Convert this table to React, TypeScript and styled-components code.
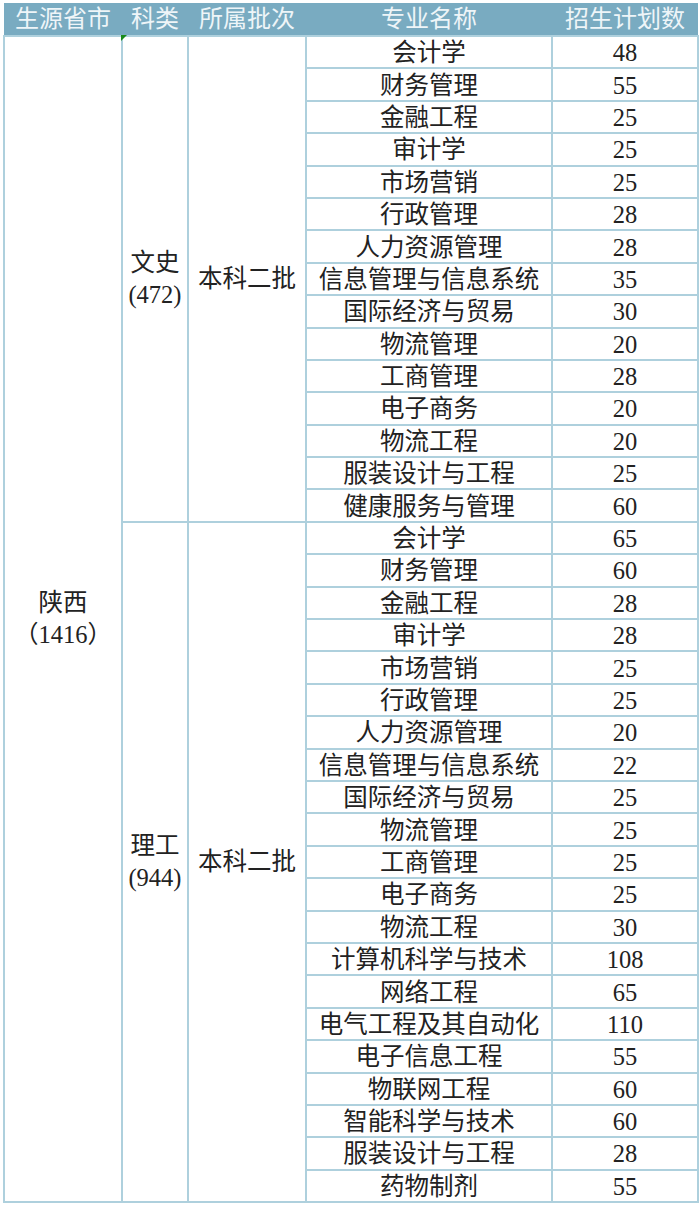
import React from 'react';
import styled, { createGlobalStyle } from 'styled-components';

const GlobalStyle = createGlobalStyle`
  html, body {
    margin: 0;
    padding: 0;
    background: #ffffff;
  }
  body {
    font-family: "Liberation Serif", "Noto Sans CJK SC", serif;
  }
`;

const Page = styled.div`
  padding: 3px 0 0 3px;
`;

const Wrap = styled.div`
  position: relative;
  width: 694px;
`;

const Table = styled.table`
  border-collapse: collapse;
  table-layout: fixed;
  width: 694px;
  font-size: 24.5px;
  color: #222;
`;

const HeadRow = styled.tr`
  height: 32px;
  background: #79abc1;
`;

const Th = styled.th`
  font-weight: normal;
  font-size: 24px;
  color: #eef5f8;
  padding: 0;
  text-align: center;
  line-height: 32px;
  white-space: nowrap;
  border: none;
`;

const Row = styled.tr`
  height: 32.4px;
`;

const Td = styled.td<{ $span?: boolean }>`
  border: 2px solid #aed0dd;
  padding: ${(p) => (p.$span ? '0' : '2px 0 0')};
  text-align: center;
  vertical-align: middle;
  white-space: nowrap;
  line-height: ${(p) => (p.$span ? '32px' : '26px')};
`;

const Marker = styled.div`
  position: absolute;
  left: 118px;
  top: 32px;
  width: 0;
  height: 0;
  border-top: 6px solid #1a8a1a;
  border-right: 6px solid transparent;
`;

type Item = [string, number];

const wenshi: Item[] = [
  ['会计学', 48],
  ['财务管理', 55],
  ['金融工程', 25],
  ['审计学', 25],
  ['市场营销', 25],
  ['行政管理', 28],
  ['人力资源管理', 28],
  ['信息管理与信息系统', 35],
  ['国际经济与贸易', 30],
  ['物流管理', 20],
  ['工商管理', 28],
  ['电子商务', 20],
  ['物流工程', 20],
  ['服装设计与工程', 25],
  ['健康服务与管理', 60],
];

const ligong: Item[] = [
  ['会计学', 65],
  ['财务管理', 60],
  ['金融工程', 28],
  ['审计学', 28],
  ['市场营销', 25],
  ['行政管理', 25],
  ['人力资源管理', 20],
  ['信息管理与信息系统', 22],
  ['国际经济与贸易', 25],
  ['物流管理', 25],
  ['工商管理', 25],
  ['电子商务', 25],
  ['物流工程', 30],
  ['计算机科学与技术', 108],
  ['网络工程', 65],
  ['电气工程及其自动化', 110],
  ['电子信息工程', 55],
  ['物联网工程', 60],
  ['智能科学与技术', 60],
  ['服装设计与工程', 28],
  ['药物制剂', 55],
];

const total = wenshi.length + ligong.length;

const App: React.FC = () => {
  return (
    <Page>
      <GlobalStyle />
      <Wrap>
        <Table>
          <colgroup>
            <col style={{ width: 118 }} />
            <col style={{ width: 66 }} />
            <col style={{ width: 118 }} />
            <col style={{ width: 246 }} />
            <col style={{ width: 146 }} />
          </colgroup>
          <thead>
            <HeadRow>
              <Th>生源省市</Th>
              <Th>科类</Th>
              <Th>所属批次</Th>
              <Th>专业名称</Th>
              <Th>招生计划数</Th>
            </HeadRow>
          </thead>
          <tbody>
            {wenshi.map(([name, num], i) => (
              <Row key={'w' + i}>
                {i === 0 && (
                  <Td rowSpan={total} $span>
                    陕西
                    <br />
                    （1416）
                  </Td>
                )}
                {i === 0 && (
                  <Td rowSpan={wenshi.length} $span>
                    文史
                    <br />
                    (472)
                  </Td>
                )}
                {i === 0 && (
                  <Td rowSpan={wenshi.length} $span>
                    本科二批
                  </Td>
                )}
                <Td>{name}</Td>
                <Td>{num}</Td>
              </Row>
            ))}
            {ligong.map(([name, num], i) => (
              <Row key={'l' + i}>
                {i === 0 && (
                  <Td rowSpan={ligong.length} $span>
                    理工
                    <br />
                    (944)
                  </Td>
                )}
                {i === 0 && (
                  <Td rowSpan={ligong.length} $span>
                    本科二批
                  </Td>
                )}
                <Td>{name}</Td>
                <Td>{num}</Td>
              </Row>
            ))}
          </tbody>
        </Table>
        <Marker />
      </Wrap>
    </Page>
  );
};

export default App;
